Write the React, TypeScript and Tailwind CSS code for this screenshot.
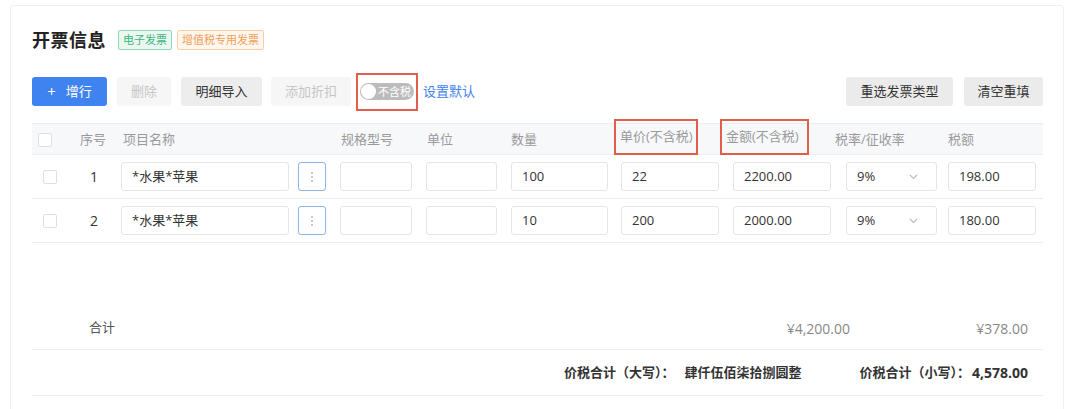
const font = { fontFamily: '"Open Sans", "Noto Sans CJK SC", sans-serif' };

const rows = [
  { no: 1, name: "*水果*苹果", qty: "100", price: "22", amount: "2200.00", rate: "9%", tax: "198.00" },
  { no: 2, name: "*水果*苹果", qty: "10", price: "200", amount: "2000.00", rate: "9%", tax: "180.00" },
];

const cols = "grid grid-cols-[38px_48px_218px_86px_85px_103px_106px_115px_113px_99px]";

function Box({ className = "", children }: { className?: string; children?: React.ReactNode }) {
  return (
    <div
      className={`h-[29px] border border-[#e3e5ea] rounded-[3px] bg-white flex items-center pl-[10px] text-[13px] text-[#333] ${className}`}
    >
      {children}
    </div>
  );
}

function Check({ className = "" }: { className?: string }) {
  return <div className={`w-[14px] h-[14px] border border-[#dcdfe3] rounded-[2px] bg-white ${className}`} />;
}

export default function App() {
  return (
    <div className="w-[1080px] h-[409px] bg-white overflow-hidden pt-[5px] pl-[10px]" style={font}>
      <div className="w-[1054px] h-[420px] border border-[#eeeff2] rounded-[3px] pl-[21px] pr-[20px]">
        {/* title */}
        <div className="flex items-center h-[24px] mt-[22px]">
          <h1 className="text-[18px] font-bold text-[#222] tracking-[0.5px]">开票信息</h1>
          <span className="ml-[12px] h-[20px] px-[4px] flex items-center text-[11px] text-[#3db57e] bg-[#eaf8f1] border border-[#8fd8b7] rounded-[2px]">
            电子发票
          </span>
          <span className="ml-[5px] h-[20px] px-[4px] flex items-center text-[11px] text-[#f0a05a] bg-[#fff6ed] border border-[#f8cfa6] rounded-[2px]">
            增值税专用发票
          </span>
        </div>

        {/* toolbar */}
        <div className="flex items-center h-[29px] mt-[25px] text-[13px]">
          <button className="w-[75px] h-[29px] rounded-[3px] bg-[#3f83f0] text-white flex items-center justify-center gap-[10px]">
            <span className="text-[15px] leading-none">+</span>
            <span>增行</span>
          </button>
          <button className="ml-[10px] w-[54px] h-[29px] rounded-[3px] bg-[#f6f6f6] text-[#c6c6c6]">删除</button>
          <button className="ml-[10px] w-[81px] h-[29px] rounded-[3px] bg-[#ededed] text-[#333]">明细导入</button>
          <button className="ml-[9px] w-[80px] h-[29px] rounded-[3px] bg-[#f6f6f6] text-[#c6c6c6]">添加折扣</button>
          <div className="ml-[5px] w-[62px] h-[38px] -my-[5px] border-2 border-[#df5f4b] flex items-center justify-center">
            <div className="w-[54px] h-[17px] rounded-full bg-[#bcbcbc] flex items-center pl-[1px]">
              <div className="w-[15px] h-[15px] rounded-full bg-white" />
              <span className="ml-[2px] text-[11px] text-white leading-none">不含税</span>
            </div>
          </div>
          <span className="ml-[5px] text-[#3f83f0]">设置默认</span>
          <div className="flex-1" />
          <button className="w-[107px] h-[29px] rounded-[3px] bg-[#ebebeb] text-[#333]">重选发票类型</button>
          <button className="ml-[11px] w-[79px] h-[29px] rounded-[3px] bg-[#ebebeb] text-[#333]">清空重填</button>
        </div>

        {/* table header */}
        <div className={`${cols} mt-[17px] h-[32px] bg-[#f7f8fa] border-y border-[#eceef2] items-center text-[13px] text-[#9a9a9a]`}>
          <div><Check className="ml-[6px]" /></div>
          <div className="pl-[10px]">序号</div>
          <div className="pl-[5px]">项目名称</div>
          <div className="pl-[5px]">规格型号</div>
          <div className="pl-[5px]">单位</div>
          <div className="pl-[4px]">数量</div>
          <div className="flex">
            <span className="ml-[4px] -mt-[5px] h-[36px] w-[84px] border-2 border-[#df5f4b] flex items-center pl-[4px]">单价(不含税)</span>
          </div>
          <div className="flex">
            <span className="ml-[4px] -mt-[5px] h-[36px] w-[89px] border-2 border-[#df5f4b] flex items-center pl-[4px]">金额(不含税)</span>
          </div>
          <div className="pl-[4px]">税率/征收率</div>
          <div className="pl-[4px]">税额</div>
        </div>

        {/* rows */}
        {rows.map((r) => (
          <div key={r.no} className={`${cols} h-[44px] border-b border-[#e9ebef] items-center`}>
            <div><Check className="ml-[11px]" /></div>
            <div className="text-center text-[14px] text-[#333]">{r.no}</div>
            <div className="flex items-center">
              <Box className="ml-[3px] w-[168px]">{r.name}</Box>
              <div className="ml-[9px] w-[28px] h-[29px] border border-[#8fb2ea] rounded-[3px] flex flex-col items-center justify-center gap-[2px]">
                <span className="w-[2px] h-[2px] rounded-full bg-[#b5b5b5]" />
                <span className="w-[2px] h-[2px] rounded-full bg-[#b5b5b5]" />
                <span className="w-[2px] h-[2px] rounded-full bg-[#b5b5b5]" />
              </div>
            </div>
            <div><Box className="ml-[4px] w-[72px]" /></div>
            <div><Box className="ml-[4px] w-[71px]" /></div>
            <div><Box className="ml-[4px] w-[97px]">{r.qty}</Box></div>
            <div><Box className="ml-[11px] w-[98px]">{r.price}</Box></div>
            <div><Box className="ml-[17px] w-[98px]">{r.amount}</Box></div>
            <div>
              <Box className="ml-[15px] w-[91px] justify-between pr-[18px]">
                <span>{r.rate}</span>
                <svg width="9" height="6" viewBox="0 0 9 6" fill="none">
                  <path d="M1 1l3.5 3.5L8 1" stroke="#b8b8b8" strokeWidth="1.1" />
                </svg>
              </Box>
            </div>
            <div><Box className="ml-[4px] w-[88px]">{r.tax}</Box></div>
          </div>
        ))}

        {/* totals */}
        <div className="h-[107px] border-b border-[#eceef2] flex items-end">
          <div className="h-[42px] w-full flex items-center text-[14px]">
            <span className="ml-[57px] text-[13px] text-[#555]">合计</span>
            <div className="flex-1" />
            <span className="text-[#888]">¥4,200.00</span>
            <span className="w-[178px] text-right text-[#888]">¥378.00</span>
            <div className="w-[15px]" />
          </div>
        </div>

        <div className="h-[46px] border-b border-[#eceef2] flex items-center justify-end pr-[15px] text-[13px] font-bold text-[#333]">
          <span>价税合计（大写）：</span>
          <span className="ml-[10px]">肆仟伍佰柒拾捌圆整</span>
          <span className="ml-[58px]">价税合计（小写）：</span>
          <span className="ml-[2px] text-[14px]">4,578.00</span>
        </div>
      </div>
    </div>
  );
}
